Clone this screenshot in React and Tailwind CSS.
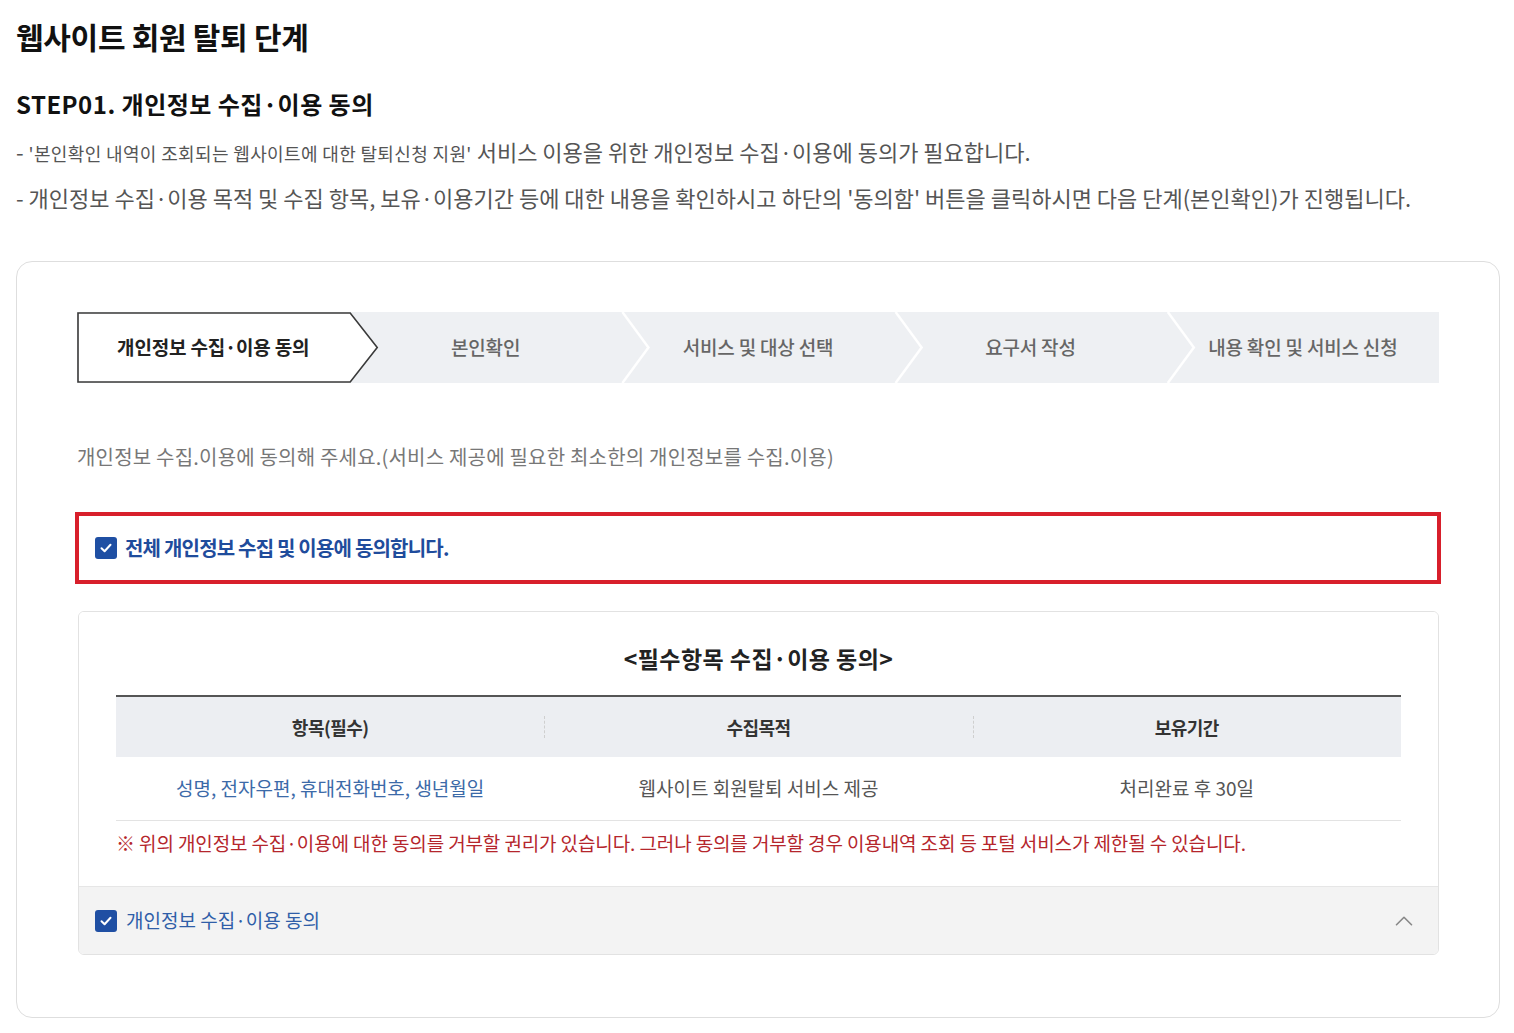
import { ChevronUp } from 'lucide-react'

const FONT = { fontFamily: '"Noto Sans CJK KR", "Noto Sans", sans-serif' }

const steps = ['개인정보 수집·이용 동의', '본인확인', '서비스 및 대상 선택', '요구서 작성', '내용 확인 및 서비스 신청']

function CheckBox() {
  return (
    <span className="flex h-[22px] w-[22px] shrink-0 items-center justify-center rounded-[3px] bg-[#1f4fa3]">
      <svg width="14" height="14" viewBox="0 0 14 14" fill="none">
        <path d="M2.5 7.2 L5.6 10.2 L11.5 3.8" stroke="white" strokeWidth="2" strokeLinecap="round" strokeLinejoin="round" />
      </svg>
    </span>
  )
}

function Stepper() {
  return (
    <div className="relative h-[71px] bg-[#eef0f3]">
      <svg className="absolute inset-0 h-full w-full" viewBox="0 0 1361 71" preserveAspectRatio="none">
        <polygon points="1,1 273,1 300,35.5 273,70 1,70" fill="white" stroke="#3a3a3a" strokeWidth="1.6" />
        <polyline points="545,0 571,35.5 545,71" fill="none" stroke="white" strokeWidth="2.5" />
        <polyline points="818,0 844,35.5 818,71" fill="none" stroke="white" strokeWidth="2.5" />
        <polyline points="1090,0 1116,35.5 1090,71" fill="none" stroke="white" strokeWidth="2.5" />
      </svg>
      <div className="relative flex h-full">
        {steps.map((s, i) => (
          <div
            key={s}
            className={
              'flex flex-1 items-center justify-center text-[19px] tracking-[-0.01em] ' +
              (i === 0 ? 'font-semibold text-[#222]' : 'font-medium text-[#666]')
            }
          >
            {s}
          </div>
        ))}
      </div>
    </div>
  )
}

export default function App() {
  return (
    <div className="min-h-[1033px] bg-white pl-4 pr-[14px] pt-[15px]" style={FONT}>
      <h1 className="text-[30px] font-bold leading-[42px] tracking-[-0.01em] text-[#111]">웹사이트 회원 탈퇴 단계</h1>
      <h2 className="mt-[30px] text-[24px] font-semibold leading-[34px] tracking-[0.02em] text-[#111]">
        STEP01. 개인정보 수집·이용 동의
      </h2>
      <p className="mt-[14px] text-[22px] leading-[32px] text-[#555]">
        - <span className="text-[18px] tracking-[0.02em]">'본인확인 내역이 조회되는 웹사이트에 대한 탈퇴신청 지원'</span> 서비스 이용을 위한 개인정보 수집·이용에 동의가 필요합니다.
      </p>
      <p className="mt-[12px] text-[22px] leading-[32px] text-[#555]">
        - 개인정보 수집·이용 목적 및 수집 항목, 보유·이용기간 등에 대한 내용을 확인하시고 하단의 '동의함' 버튼을 클릭하시면 다음 단계(본인확인)가 진행됩니다.
      </p>

      <div className="mt-[48px] h-[757px] rounded-[16px] border border-[#dedede] px-[60px] pt-[50px]">
        <Stepper />

        <p className="mt-[60px] text-[20px] leading-[28px] tracking-[0.01em] text-[#777]">
          개인정보 수집.이용에 동의해 주세요.(서비스 제공에 필요한 최소한의 개인정보를 수집.이용)
        </p>

        <div className="mx-[-2px] mt-[41px] flex h-[72px] items-center gap-2 border-4 border-[#d81f2b] pl-4">
          <CheckBox />
          <span className="text-[20px] font-semibold tracking-[-0.04em] text-[#1f4c9c]">전체 개인정보 수집 및 이용에 동의합니다.</span>
        </div>

        <div className="ml-px mt-[27px] overflow-hidden rounded-[6px] border border-[#e2e2e2]">
          <div className="bg-white px-[37px] pb-[29px] pt-[30px]">
            <h3 className="text-center text-[23px] font-semibold leading-[32px] tracking-[0.02em] text-[#222]">
              &lt;필수항목 수집·이용 동의&gt;
            </h3>
            <div className="mt-[21px] border-t-2 border-[#555]">
              <div className="grid h-[60px] grid-cols-3 items-center bg-[#eceef2] text-[18px] font-semibold tracking-[-0.03em] text-[#333]">
                <div className="text-center">항목(필수)</div>
                <div className="relative text-center">
                  <span className="absolute left-0 top-1/2 h-[22px] -translate-y-1/2 border-l border-dashed border-[#cfcfcf]" />
                  수집목적
                </div>
                <div className="relative text-center">
                  <span className="absolute left-0 top-1/2 h-[22px] -translate-y-1/2 border-l border-dashed border-[#cfcfcf]" />
                  보유기간
                </div>
              </div>
              <div className="grid h-[64px] grid-cols-3 items-center border-b border-[#e3e3e3] text-[19px]">
                <div className="text-center text-[#3c6aa8]">성명, 전자우편, 휴대전화번호, 생년월일</div>
                <div className="text-center text-[#555]">웹사이트 회원탈퇴 서비스 제공</div>
                <div className="text-center text-[#555]">처리완료 후 30일</div>
              </div>
            </div>
            <p className="mt-[8px] text-[19px] leading-[28px] tracking-[-0.006em] text-[#b5262c]">
              ※ 위의 개인정보 수집·이용에 대한 동의를 거부할 권리가 있습니다. 그러나 동의를 거부할 경우 이용내역 조회 등 포털 서비스가 제한될 수 있습니다.
            </p>
          </div>
          <div className="flex h-[68px] items-center justify-between border-t border-[#e6e6e6] bg-[#f3f3f3] pl-4 pr-[19px]">
            <div className="flex items-center gap-[9px]">
              <CheckBox />
              <span className="text-[19px] text-[#2f5ea8]">개인정보 수집·이용 동의</span>
            </div>
            <ChevronUp size={30} strokeWidth={1.3} className="text-[#888]" />
          </div>
        </div>
      </div>
    </div>
  )
}
